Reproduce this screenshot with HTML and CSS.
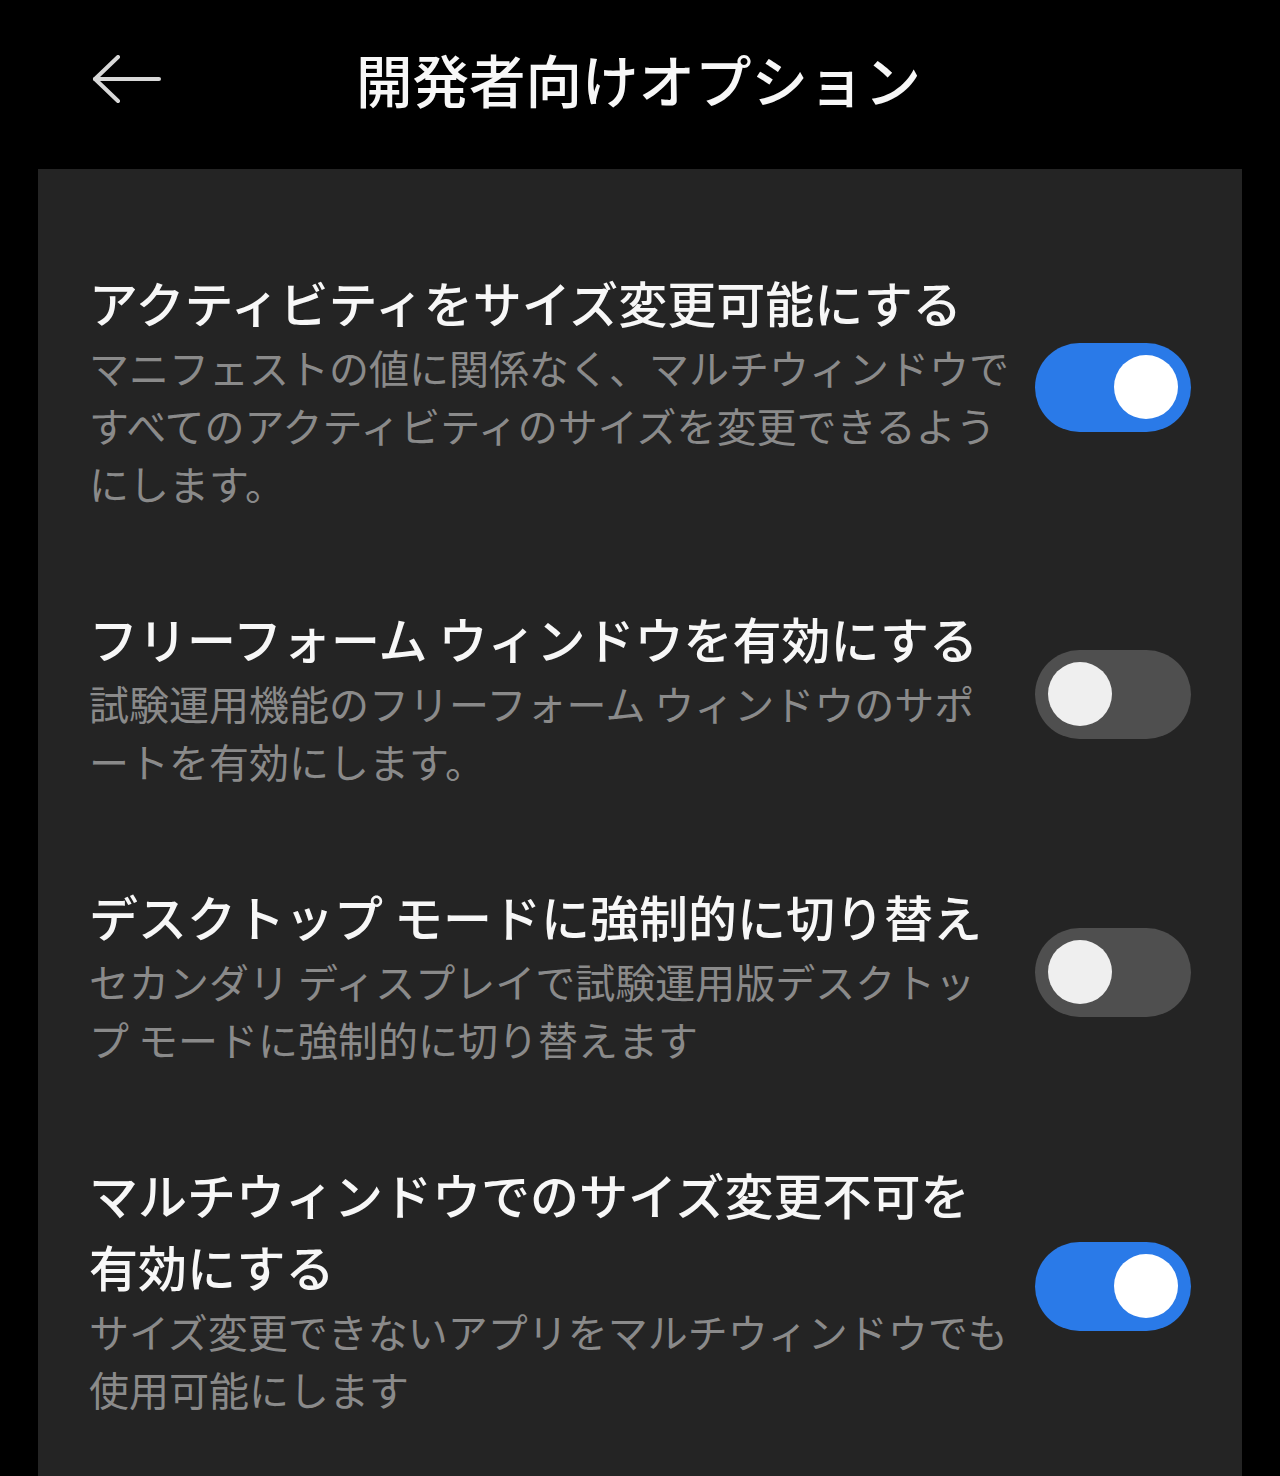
FILE: index.html
```html
<!DOCTYPE html>
<html lang="ja">
<head>
  <meta charset="UTF-8">
  <meta name="viewport" content="width=device-width, initial-scale=1.0">
  <title>開発者向けオプション</title>
  <link rel="stylesheet" href="styles.css">
</head>
<body>
  <header class="top-bar">
    <div class="back">
      <svg width="72" height="52" viewBox="0 0 72 52" fill="none" stroke="#d8d8d8" stroke-width="4" stroke-linecap="round" stroke-linejoin="round">
        <path d="M4 24 H68"/>
        <path d="M27 2 L4 24 L27 46"/>
      </svg>
    </div>
    <h1>開発者向けオプション</h1>
    <div></div>
  </header>

  <div class="card">
    <div class="setting">
      <div class="setting-text">
        <div class="setting-title">アクティビティをサイズ変更可能にする</div>
        <div class="setting-desc">マニフェストの値に関係なく、マルチウィンドウですべてのアクティビティのサイズを変更できるようにします。</div>
      </div>
      <div class="switch on"><span class="knob"></span></div>
    </div>

    <div class="setting">
      <div class="setting-text">
        <div class="setting-title">フリーフォーム ウィンドウを有効にする</div>
        <div class="setting-desc">試験運用機能のフリーフォーム ウィンドウのサポートを有効にします。</div>
      </div>
      <div class="switch"><span class="knob"></span></div>
    </div>

    <div class="setting">
      <div class="setting-text">
        <div class="setting-title">デスクトップ モードに強制的に切り替え</div>
        <div class="setting-desc">セカンダリ ディスプレイで試験運用版デスクトップ モードに強制的に切り替えます</div>
      </div>
      <div class="switch"><span class="knob"></span></div>
    </div>

    <div class="setting">
      <div class="setting-text">
        <div class="setting-title">マルチウィンドウでのサイズ変更不可を<br>有効にする</div>
        <div class="setting-desc">サイズ変更できないアプリをマルチウィンドウでも使用可能にします</div>
      </div>
      <div class="switch on"><span class="knob"></span></div>
    </div>
  </div>
</body>
</html>
```

FILE: styles.css
```css
body {
  margin: 0;
  background-color: #000;
  font-family: "Noto Sans CJK JP", "Noto Sans", sans-serif;
  color: #f5f5f5;
}
.top-bar {
  display: grid;
  grid-template-columns: 1fr auto 1fr;
  align-items: center;
  height: 169px;
  padding: 0 0 0 91px;
  box-sizing: border-box;
}
.back svg {
  display: block;
  margin-top: -8px;
}
.top-bar h1 {
  margin: 0 0 12px;
  font-size: 56.5px;
  font-weight: 500;
  line-height: 1;
  color: #f7f7f7;
  transform: translateX(-47px);
}
.card {
  margin: 0 38px;
  padding: 52px 51px 12px 51px;
  background-color: #242424;
  min-height: 1307px;
  box-sizing: border-box;
}
.setting {
  display: flex;
  align-items: center;
  padding: 45px 0;
}
.setting-text {
  width: 922px;
}
.setting-title {
  font-size: 49px;
  font-weight: 500;
  line-height: 72px;
  color: #f7f7f7;
}
.setting-desc {
  font-size: 40px;
  line-height: 58px;
  color: #8a8a8a;
}
.switch {
  margin-left: auto;
  margin-top: -4px;
  width: 156px;
  height: 89px;
  border-radius: 45px;
  background-color: #4f4f4f;
  display: flex;
  align-items: center;
  padding: 0 13px;
  box-sizing: border-box;
}
.switch.on {
  background-color: #2a7ae8;
  justify-content: flex-end;
}
.knob {
  width: 64px;
  height: 64px;
  border-radius: 50%;
  background-color: #efefef;
}
.switch.on .knob {
  background-color: #fff;
}
```
